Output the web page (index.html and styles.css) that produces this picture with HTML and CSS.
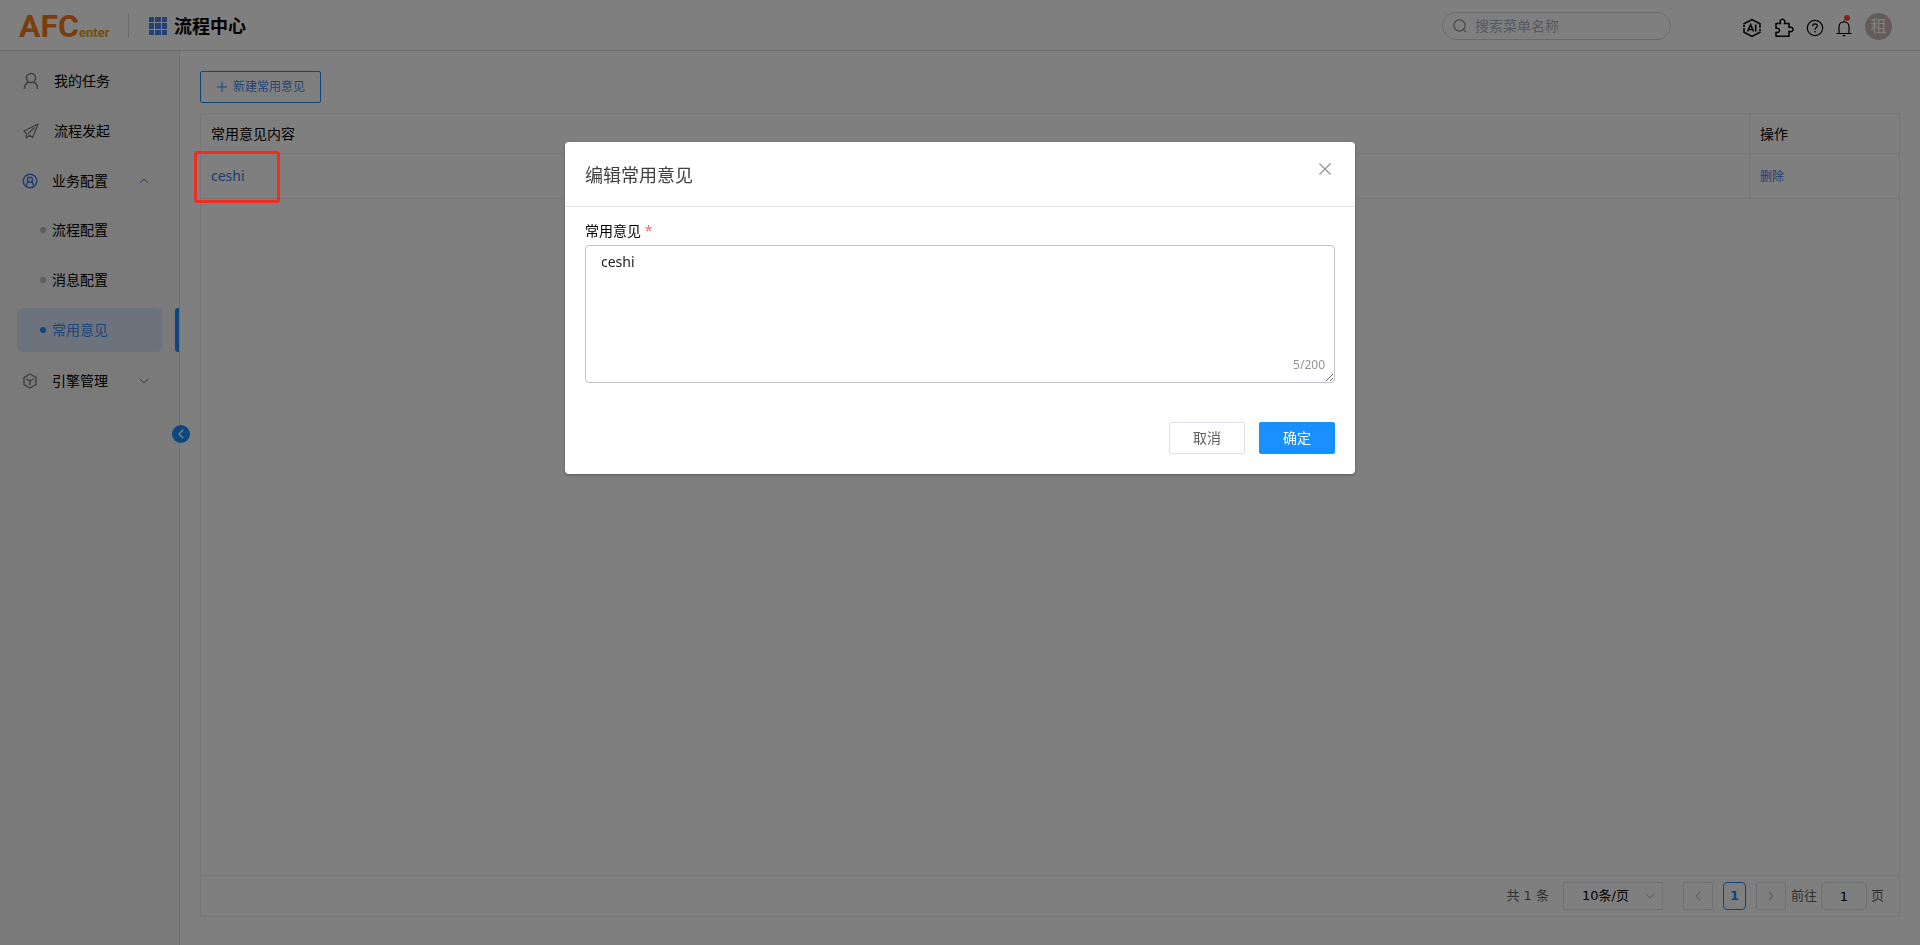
FILE: index.html
```
<!DOCTYPE html>
<html lang="zh-CN">
<head>
    <meta charset="UTF-8">
    <meta name="viewport" content="width=device-width, initial-scale=1.0">
    <title>流程中心</title>
    <link rel="stylesheet" href="styles.css">
</head>
<body>
    <header class="topbar">
        <a class="logo" href="#"><span class="logo-main">AFC</span><span class="logo-sub">enter</span></a>
        <div class="app-name">
            <svg width="18" height="18" viewBox="0 0 18 18" fill="#4a80e8">
                <path d="M0 0h5v5H0zM6 0h6v5H6zM13 0h5v5h-5zM0 6h5v6H0zM6 6h6v6H6zM13 6h5v6h-5zM0 13h5v5H0zM6 13h6v5H6zM13 13h5v5h-5z"/>
            </svg>
            <h1>流程中心</h1>
        </div>
        <label class="search">
            <svg width="14" height="14" viewBox="0 0 14 14" fill="none" stroke="#8c8f96" stroke-width="1.2">
                <circle cx="6.5" cy="6.5" r="5.6"/><path d="M10.6 10.6l2.4 2.4"/>
            </svg>
            <input type="text" placeholder="搜索菜单名称" aria-label="搜索菜单名称">
        </label>
        <nav class="tools">
            <button type="button" aria-label="AI">
                <svg width="20" height="20" viewBox="0 0 20 20" fill="none" stroke="#000" stroke-width="1.5">
                    <path d="M2 6.5V5.8L10 1.5l8 4.3v4M18 13.5v.7l-8 4.3-8-4.3V10"/>
                    <circle cx="2" cy="8" r="1.1" fill="#000" stroke="none"/><circle cx="18" cy="12" r="1.1" fill="#000" stroke="none"/>
                    <path d="M5.6 13.4L8.6 6.6l3 6.8M6.6 11.4h4M13.7 6.4v7"/>
                </svg>
            </button>
            <button type="button" aria-label="插件">
                <svg width="20" height="20" viewBox="0 0 20 20" fill="none" stroke="#000" stroke-width="1.5" stroke-linejoin="round">
                    <path d="M2 5.5h4.6C5.6 3.2 6.6 1.3 8.5 1.3s2.9 1.9 1.9 4.2H15v4c2.3-.9 4 .1 4 1.9s-1.7 2.8-4 1.9v5H2v-4c2.3.4 3.5-.4 3.5-2S4.3 9.9 2 10.3z"/>
                </svg>
            </button>
            <button type="button" aria-label="帮助">
                <svg width="18" height="18" viewBox="0 0 18 18" fill="none" stroke="#000" stroke-width="1.2">
                    <circle cx="9" cy="9" r="7.7"/>
                    <path d="M6.7 7.3c0-1.5 1-2.4 2.3-2.4s2.3.9 2.3 2.1c0 1.7-2.3 1.8-2.3 3.7"/><path d="M9 12v1.4"/>
                </svg>
            </button>
            <button type="button" class="bell" aria-label="通知">
                <svg width="16" height="18" viewBox="0 0 16 18" fill="none" stroke="#000" stroke-width="1.2">
                    <path d="M.5 14.5h15M3 14.5V8c0-3 2-5 5-5s5 2 5 5v6.5M8 1.5V3M6.7 16.7h2.6"/>
                </svg>
                <span class="dot"></span>
            </button>
        </nav>
        <a class="avatar" href="#">租</a>
    </header>

    <div class="layout">
        <aside class="sidebar">
            <a class="item" href="#">
                <svg width="16" height="18" viewBox="0 0 16 18" fill="none" stroke="#7a7c80" stroke-width="1.5">
                    <circle cx="8" cy="6" r="4.6"/><path d="M1.4 17c0-3.4 1.6-5.8 4.2-6.7M14.6 17c0-3.4-1.6-5.8-4.2-6.7"/>
                </svg>
                <span class="text">我的任务</span>
            </a>
            <a class="item" href="#">
                <svg width="16" height="16" viewBox="0 0 16 16" fill="none" stroke="#7a7c80" stroke-width="1.3" stroke-linejoin="round">
                    <path d="M15 1L1 8l2.3 2.3V15l3.2-2.8 3.2 2.3z"/><path d="M11.5 4.5L5 10.8"/>
                </svg>
                <span class="text">流程发起</span>
            </a>
            <a class="item group" href="#">
                <svg width="16" height="16" viewBox="0 0 16 16" fill="none" stroke="#3d7be0" stroke-width="1.4">
                    <circle cx="8" cy="8" r="6.8"/><circle cx="8" cy="6.7" r="2.5"/><path d="M4.7 12.6V11.4c0-1.1.7-1.9 1.8-2.4M11.3 12.6V11.4c0-1.1-.7-1.9-1.8-2.4"/>
                </svg>
                <span class="text">业务配置</span>
                <svg class="arrow" width="10" height="6" viewBox="0 0 10 6" fill="none" stroke="#5d82c4"><path d="M.7 5.3L5 1l4.3 4.3"/></svg>
            </a>
            <a class="item sub" href="#"><span class="text">流程配置</span></a>
            <a class="item sub" href="#"><span class="text">消息配置</span></a>
            <a class="item sub active" href="#"><span class="text">常用意见</span></a>
            <a class="item group" href="#">
                <svg width="16" height="16" viewBox="0 0 16 16" fill="none" stroke="#7a7c80" stroke-width="1.4" stroke-linejoin="round">
                    <path d="M8 1l6 3.3v7.4L8 15l-6-3.3V4.3z"/><path d="M4.4 5.8L8 8l3.6-2.2M8 8v4.3"/>
                </svg>
                <span class="text">引擎管理</span>
                <svg class="arrow" width="10" height="6" viewBox="0 0 10 6" fill="none" stroke="#7a7c80"><path d="M.7.7L5 5 9.3.7"/></svg>
            </a>
            <button type="button" class="collapse" aria-label="收起">
                <svg width="6" height="10" viewBox="0 0 6 10" fill="none" stroke="#fff" stroke-width="1.4"><path d="M5.3.7L1 5l4.3 4.3"/></svg>
            </button>
        </aside>

        <main class="content">
            <button type="button" class="btn-create">
                <svg width="10" height="10" viewBox="0 0 10 10" stroke="#1890ff"><path d="M0 5h10M5 0v10"/></svg>
                新建常用意见
            </button>
            <section class="panel">
                <table>
                    <thead>
                        <tr><th>常用意见内容</th><th class="col-op">操作</th></tr>
                    </thead>
                    <tbody>
                        <tr>
                            <td class="marked"><a href="#">ceshi</a><span class="mark"></span></td>
                            <td><a class="small" href="#">删除</a></td>
                        </tr>
                    </tbody>
                </table>
                <footer class="pager">
                    <span class="total">共 1 条</span>
                    <span class="page-size">
                        <select aria-label="每页条数"><option>10条/页</option></select>
                        <svg width="10" height="6" viewBox="0 0 10 6" fill="none" stroke="#b0b3ba"><path d="M.7.7L5 5 9.3.7"/></svg>
                    </span>
                    <button type="button" class="step" aria-label="上一页">
                        <svg width="6" height="10" viewBox="0 0 6 10" fill="none" stroke="#c0c4cc" stroke-width="1.2"><path d="M5.3.7L1 5l4.3 4.3"/></svg>
                    </button>
                    <button type="button" class="current">1</button>
                    <button type="button" class="step" aria-label="下一页">
                        <svg width="6" height="10" viewBox="0 0 6 10" fill="none" stroke="#c0c4cc" stroke-width="1.2"><path d="M.7.7L5 5 .7 9.3"/></svg>
                    </button>
                    <label class="jump">前往<input type="text" value="1">页</label>
                </footer>
            </section>
        </main>
    </div>

    <div class="overlay">
        <form class="dialog" role="dialog" aria-labelledby="dialogTitle">
            <div class="dialog-head">
                <h2 id="dialogTitle">编辑常用意见</h2>
                <button type="button" class="close" aria-label="关闭">
                    <svg width="12" height="12" viewBox="0 0 12 12" stroke="#909399" stroke-width="1.3"><path d="M.5.5l11 11M11.5.5l-11 11"/></svg>
                </button>
            </div>
            <div class="dialog-body">
                <label for="opinion">常用意见 <span class="required">*</span></label>
                <div class="field">
                    <textarea id="opinion" maxlength="200">ceshi</textarea>
                    <span class="count">5/200</span>
                </div>
            </div>
            <div class="dialog-foot">
                <button type="button" class="btn">取消</button>
                <button type="submit" class="btn primary">确定</button>
            </div>
        </form>
    </div>
</body>
</html>
```
FILE: styles.css
```
* {
    box-sizing: border-box;
}

body {
    margin: 0;
    min-height: 100vh;
    display: flex;
    flex-direction: column;
    font-family: "Noto Sans", "Noto Sans CJK SC", sans-serif;
    font-size: 14px;
    line-height: 20px;
    color: #000;
    background: #fff;
}

a {
    color: #3d7be0;
    text-decoration: none;
}

button,
input,
select,
textarea {
    font: inherit;
    color: inherit;
    margin: 0;
}

button {
    padding: 0;
    border: none;
    background: none;
    cursor: pointer;
}

svg {
    display: block;
    flex: none;
}

/* top bar */
.topbar {
    height: 51px;
    display: flex;
    align-items: center;
    padding: 2px 28px 0 19px;
    border-bottom: 1px solid #d8d8d8;
}

.logo {
    display: flex;
    align-items: baseline;
    width: 110px;
    height: 24px;
    border-right: 1px solid #d8d8d8;
    line-height: 24px;
    font-family: Roboto, sans-serif;
    font-weight: bold;
}

.logo-main {
    font-size: 32px;
    color: #f87a1d;
}

.logo-sub {
    font-size: 13px;
    color: #e5a012;
}

.app-name {
    display: flex;
    align-items: center;
    gap: 7px;
    margin-left: 20px;
}

h1 {
    margin: 0;
    font-size: 18px;
    line-height: 24px;
}

.search {
    display: flex;
    align-items: center;
    gap: 8px;
    width: 229px;
    height: 28px;
    margin-left: auto;
    padding: 0 10px;
    border: 1px solid #d4d6dc;
    border-radius: 14px;
}

.search input {
    flex: 1;
    min-width: 0;
    padding: 0;
    border: none;
    outline: none;
    background: none;
}

.search input::placeholder {
    color: #b0b3ba;
}

.tools {
    display: flex;
    align-items: center;
    gap: 12px;
    margin: 4px 13px 0 71px;
}

.bell {
    position: relative;
}

.dot {
    position: absolute;
    top: -4px;
    right: 2px;
    width: 6px;
    height: 6px;
    border-radius: 50%;
    background: #ff4d4f;
}

.avatar {
    width: 27px;
    height: 27px;
    border-radius: 50%;
    background: #c8b8b4;
    color: #fff;
    font-size: 16px;
    line-height: 27px;
    text-align: center;
}

/* side menu */
.layout {
    flex: 1;
    display: flex;
}

.sidebar {
    position: relative;
    width: 180px;
    padding-top: 5px;
    border-right: 1px solid #e2e2e2;
    background: #f4f4f4;
}

.item {
    position: relative;
    display: flex;
    align-items: center;
    gap: 15px;
    height: 50px;
    padding: 0 30px 0 23px;
    color: #000;
}

.group {
    gap: 14px;
    padding-left: 22px;
}

.arrow {
    margin-left: auto;
}

.sub {
    height: 44px;
    margin: 2px 17px 4px;
    padding: 0 0 0 23px;
    gap: 6px;
    border-radius: 6px;
}

.sub + .sub {
    margin-top: 6px;
}

.sub::before {
    content: "";
    width: 6px;
    height: 6px;
    border-radius: 50%;
    background: #bbb;
}

.active {
    background: #dbe7f8;
    color: #3d8bf0;
}

.active::before {
    background: #1890ff;
}

.active::after {
    content: "";
    position: absolute;
    top: 0;
    right: -17px;
    width: 4px;
    height: 44px;
    border-radius: 3px 0 0 3px;
    background: #1890ff;
}

.collapse {
    position: absolute;
    top: 374px;
    right: -11px;
    width: 18px;
    height: 18px;
    display: flex;
    align-items: center;
    justify-content: center;
    border-radius: 50%;
    background: #1890ff;
}

/* list */
.content {
    flex: 1;
    display: flex;
    flex-direction: column;
    align-items: flex-start;
    gap: 10px;
    padding: 20px 20px 28px;
}

.btn-create {
    display: flex;
    align-items: center;
    gap: 6px;
    height: 32px;
    padding: 0 15px 0 16px;
    border: 1px solid #1890ff;
    border-radius: 2px;
    color: #3d8bf0;
    font-size: 12px;
}

.panel {
    flex: 1;
    align-self: stretch;
    display: flex;
    flex-direction: column;
    justify-content: space-between;
    border: 1px solid #ebeef5;
}

table {
    width: 100%;
    border-collapse: separate;
    border-spacing: 0;
    table-layout: fixed;
}

th,
td {
    height: 45px;
    padding: 0 10px;
    border-bottom: 1px solid #ebeef5;
    text-align: left;
    font-weight: normal;
}

th {
    height: 40px;
}

th + th,
td + td {
    border-left: 1px solid #ebeef5;
}

.col-op {
    width: 150px;
}

.small {
    font-size: 12px;
}

.marked {
    position: relative;
}

.mark {
    position: absolute;
    z-index: 20;
    top: -3px;
    left: -7px;
    width: 86px;
    height: 52px;
    border: 3px solid #f12d20;
    border-radius: 4px;
}

.pager {
    display: flex;
    align-items: center;
    justify-content: flex-end;
    height: 41px;
    padding-right: 15px;
    border-top: 1px solid #ebeef5;
    font-family: "DejaVu Sans", "Noto Sans CJK SC", sans-serif;
    font-size: 13px;
    color: #606266;
}

.page-size {
    display: flex;
    align-items: center;
    width: 100px;
    height: 28px;
    margin: 0 20px 0 14px;
    padding-right: 7px;
    border: 1px solid #dcdfe6;
    border-radius: 2px;
}

.page-size select {
    flex: 1;
    min-width: 0;
    padding: 0 0 0 18px;
    border: none;
    background: none;
    appearance: none;
    color: #000;
}

.step,
.current {
    display: flex;
    align-items: center;
    justify-content: center;
    width: 30px;
    height: 28px;
    border: 1px solid #dcdfe6;
    border-radius: 2px;
}

.current {
    width: 23px;
    margin: 0 10px;
    border-color: #1890ff;
    border-radius: 4px;
    color: #1890ff;
    font-weight: bold;
}

.jump {
    display: flex;
    align-items: center;
    gap: 4px;
    margin-left: 5px;
}

.jump input {
    width: 46px;
    height: 28px;
    padding: 0;
    border: 1px solid #dcdfe6;
    border-radius: 4px;
    background: none;
    color: #000;
    text-align: center;
}

/* dialog */
.overlay {
    position: fixed;
    inset: 0;
    z-index: 10;
    display: flex;
    align-items: flex-start;
    justify-content: center;
    padding-top: 15vh;
    background: rgba(0, 0, 0, 0.5);
}

.dialog {
    width: 790px;
    max-width: 90%;
    border-radius: 4px;
    background: #fff;
    box-shadow: 0 1px 3px rgba(0, 0, 0, 0.3);
}

.dialog-head {
    display: flex;
    justify-content: space-between;
    height: 65px;
    padding: 21px 24px 0 20px;
    border-bottom: 1px solid #e4e4e4;
}

h2 {
    margin: 0;
    font-size: 18px;
    font-weight: normal;
    line-height: 24px;
    color: #404144;
}

.close {
    align-self: flex-start;
}

.dialog-body {
    padding: 14px 20px 0;
}

.dialog-body label {
    display: block;
    margin-bottom: 4px;
}

.required {
    color: #f56c6c;
}

.field {
    position: relative;
}

textarea {
    display: block;
    width: 100%;
    height: 138px;
    padding: 6px 15px;
    border: 1px solid #c0c4cc;
    border-radius: 4px;
    outline: none;
    color: #222;
}

.count {
    position: absolute;
    right: 10px;
    bottom: 8px;
    font-size: 12px;
    color: #909399;
}

.dialog-foot {
    display: flex;
    justify-content: flex-end;
    gap: 14px;
    padding: 39px 20px 20px;
}

.btn {
    width: 76px;
    height: 32px;
    border: 1px solid #dcdfe6;
    border-radius: 2px;
    color: #606266;
}

.primary {
    border-color: #1890ff;
    background: #1890ff;
    color: #fff;
}
```
